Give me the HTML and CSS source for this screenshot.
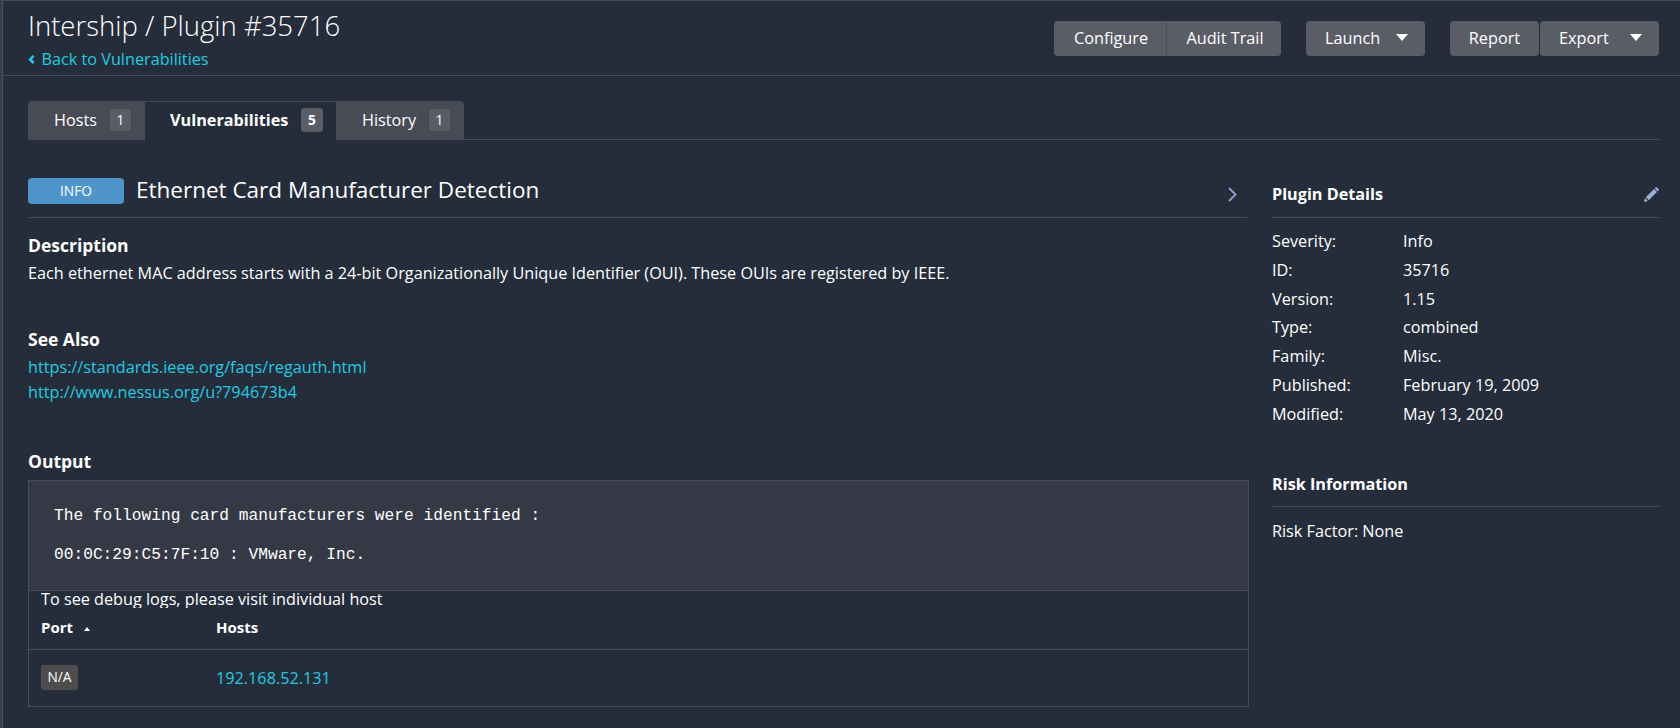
FILE: index.html
```html
<!DOCTYPE html>
<html lang="en">
<head>
<meta charset="utf-8">
<title>Intership / Plugin #35716</title>
<link rel="stylesheet" href="styles.css">
</head>
<body>
<div class="page">
  <header class="header">
    <div class="heading">
      <h1 class="title">Intership / Plugin #35716</h1>
      <a class="back"><svg class="back-icon" width="7" height="9" viewBox="0 0 7 9"><path d="M5.6 0.8L2.2 4.4l3.4 3.6" fill="none" stroke="currentColor" stroke-width="2.6"/></svg>Back to Vulnerabilities</a>
    </div>
    <div class="actions">
      <div class="group joined"><button class="btn configure">Configure</button><button class="btn audit">Audit Trail</button></div>
      <button class="btn drop launch">Launch<i class="caret"></i></button>
      <div class="group"><button class="btn report">Report</button><button class="btn drop export">Export<i class="caret"></i></button></div>
    </div>
  </header>
  <nav class="tabs">
    <a class="tab hosts">Hosts<span class="count">1</span></a>
    <a class="tab active">Vulnerabilities<span class="count">5</span></a>
    <a class="tab history">History<span class="count">1</span></a>
  </nav>
  <div class="content">
    <main class="main">
      <div class="plugin-head">
        <span class="severity">INFO</span>
        <h2 class="plugin-name">Ethernet Card Manufacturer Detection</h2>
        <svg class="next" width="9" height="15" viewBox="0 0 9 15"><path d="M1 1l6.5 6.5L1 14" fill="none" stroke="currentColor" stroke-width="2"/></svg>
      </div>
      <section class="description">
        <h3 class="section-title">Description</h3>
        <p class="text">Each ethernet MAC address starts with a 24-bit Organizationally Unique Identifier (OUI). These OUIs are registered by IEEE.</p>
      </section>
      <section class="see-also">
        <h3 class="section-title">See Also</h3>
        <a class="link">https://standards.ieee.org/faqs/regauth.html</a>
        <a class="link">http://www.nessus.org/u?794673b4</a>
      </section>
      <section>
        <h3 class="section-title">Output</h3>
        <div class="output">
<pre class="log">The following card manufacturers were identified :

00:0C:29:C5:7F:10 : VMware, Inc.</pre>
          <div class="debug">To see debug logs, please visit individual host</div>
          <div class="row head"><span>Port<i class="sort"></i></span><span>Hosts</span></div>
          <div class="row body"><span><b class="port">N/A</b></span><a class="ip">192.168.52.131</a></div>
        </div>
      </section>
    </main>
    <aside class="side">
      <div class="side-head"><h4 class="side-title">Plugin Details</h4>
        <svg class="pencil" width="15" height="15" viewBox="0 0 16 16" fill="currentColor"><path d="M0 16l1-4.2L4.2 15z"/><path d="M1.9 11L10.7 2.2l3.1 3.1L5 14.1z"/><path d="M11.4 1.5l1-1q.7-.7 1.4 0l1.7 1.7q.7.7 0 1.4l-1 1z"/></svg>
      </div>
      <dl class="details">
        <dt>Severity:</dt><dd>Info</dd>
        <dt>ID:</dt><dd>35716</dd>
        <dt>Version:</dt><dd>1.15</dd>
        <dt>Type:</dt><dd>combined</dd>
        <dt>Family:</dt><dd>Misc.</dd>
        <dt>Published:</dt><dd>February 19, 2009</dd>
        <dt>Modified:</dt><dd>May 13, 2020</dd>
      </dl>
      <div class="side-head risk"><h4 class="side-title">Risk Information</h4></div>
      <p class="factor">Risk Factor: None</p>
    </aside>
  </div>
</div>
</body>
</html>
```

FILE: styles.css
```css
* { box-sizing: border-box; margin: 0; padding: 0; }
body { background: #252d3b; color: #fff; font: 16.23px/24px "Open Sans", sans-serif; overflow: hidden; border-left: 2px solid #383c47; }
.page { height: 728px; border-top: 1px solid #474c56; border-left: 1px solid #4b4f59; }
.header { height: 75px; border-bottom: 1px solid #474c56; padding: 7px 21px 0 25px; display: flex; justify-content: space-between; }
.title { font-size: 27.5px; font-weight: 300; line-height: 36px; }
.back { display: flex; align-items: center; color: #1bcde1; line-height: 24px; margin-top: 3px; }
.back-icon { margin-right: 6.5px; }
.actions { display: flex; gap: 25px; padding-top: 13px; }
.group { display: flex; gap: 1px; }
.joined { gap: 0; }
.btn { height: 35px; border: 0; border-radius: 4px; background: #5b5d66; color: #fff; font: 16.25px/35px "Open Sans", sans-serif; display: flex; justify-content: center; align-items: center; }
.configure { width: 113px; border-right: 1px solid #4b4e58; border-radius: 4px 0 0 4px; padding-left: 2px; }
.audit { width: 114px; border-radius: 0 4px 4px 0; padding-left: 2px; }
.drop { width: 119px; justify-content: space-between; padding: 0 17px 0 19px; }
.report { width: 89px; }
.caret { border: 6px solid transparent; border-top: 7px solid #fff; border-bottom: 0; margin-top: -3px; }
.tabs { margin: 25px 21px 0 25px; height: 39px; display: flex; border-bottom: 1px solid #474c56; }
.tab { height: 39px; display: flex; align-items: center; justify-content: space-between; padding: 0 14px 2px 26px; background: #484b55; border-top: 1px solid #484b55; }
.hosts { width: 117px; border-radius: 4px 0 0 0; }
.active { width: 191px; background: #252d3b; font-weight: 700; padding-right: 13px; padding-left: 25px; }
.history { width: 128px; border-radius: 0 4px 0 0; }
.count { width: 21px; height: 22px; border-radius: 3px; background: #5b5d66; font-size: 13.75px; line-height: 22px; text-align: center; }
.active .count { width: 22px; height: 24px; line-height: 24px; }
.content { display: flex; gap: 23px; padding: 24px 21px 0 25px; }
.main { width: 1221px; }
.plugin-head { width: 1219px; height: 54px; border-bottom: 1px solid #474c56; display: flex; align-items: center; }
.severity { width: 96px; height: 26px; border-radius: 4px; background: #4e95cc; font-size: 13.75px; line-height: 26px; text-align: center; margin-right: 12px; }
.plugin-name { font-size: 22.5px; font-weight: 400; line-height: 30px; flex: 1; padding-bottom: 1px; }
.next { color: #8c9dd0; margin-right: 10px; margin-top: 7px; }
.section-title { font-size: 17.5px; line-height: 24px; font-weight: 700; }
.description { padding-top: 15px; }
.text { margin-top: 4px; }
.see-also { margin: 42px 0 44px; }
.link { display: block; color: #1bcde1; line-height: 25px; }
.see-also .section-title { margin-bottom: 4px; }
.output { margin-top: 7px; border: 1px solid #474c56; height: 227px; }
.log { height: 110px; background: #343945; border-bottom: 1px solid #474c56; padding: 26px 25px 24px; font: 16.22px/19.5px "Courier New", "Liberation Mono", monospace; }
.debug { padding-left: 12px; height: 17px; line-height: 17px; overflow: hidden; }
.row { display: grid; grid-template-columns: 175px 1fr; padding-left: 12px; }
.head { height: 42px; border-bottom: 1px solid #474c56; font-size: 15px; font-weight: 700; line-height: 38px; }
.sort { display: inline-block; border: 3px solid transparent; border-bottom: 4px solid #fff; border-top: 0; margin-left: 11px; margin-bottom: 2px; }
.body { height: 57px; align-items: center; padding-bottom: 1px; }
.port { display: block; width: 37px; height: 25px; border-radius: 3px; background: #4d4d4d; font-weight: 400; font-size: 13.75px; line-height: 24px; text-align: center; margin-bottom: 1px; }
.ip { color: #1bcde1; margin-bottom: 1px; }
.side { flex: 1; }
.side-head { height: 54px; border-bottom: 1px solid #474c56; display: flex; justify-content: space-between; padding-top: 18px; }
.side-title { font-size: 16.22px; font-weight: 700; line-height: 24px; }
.pencil { color: #a0afd8; margin-top: 5px; }
.details { display: grid; grid-template-columns: 131px 1fr; line-height: 28.75px; padding-top: 9px; }
.risk { margin-top: 25px; padding-top: 19px; }
.factor { padding-top: 12px; }
```
